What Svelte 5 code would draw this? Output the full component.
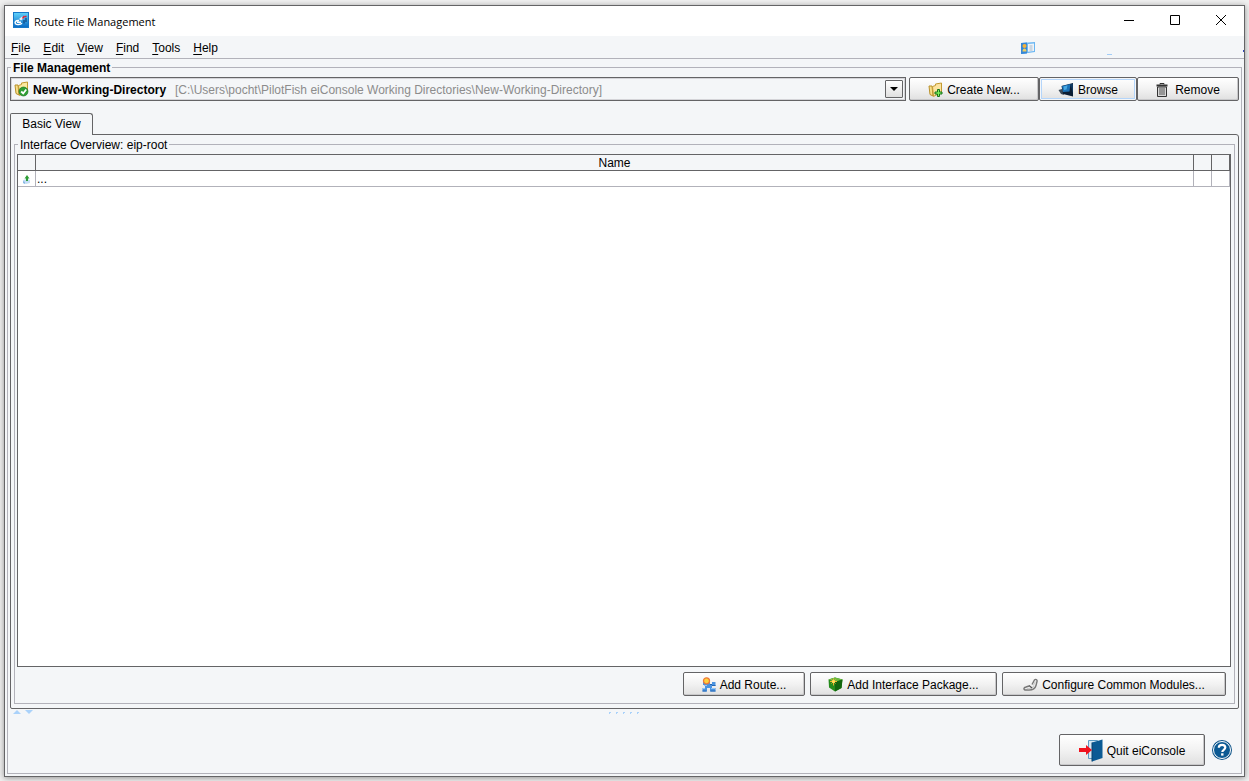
<script lang="ts">
  let directories = [
    {
      name: 'New-Working-Directory',
      path: 'C:\\Users\\pocht\\PilotFish eiConsole Working Directories\\New-Working-Directory',
    },
  ];
  let menus = ['File', 'Edit', 'View', 'Find', 'Tools', 'Help'];
  let rows = [{ name: '...' }];

  let picker: HTMLSelectElement;
  let selected = directories[0].name;
  $: current = directories.find((d) => d.name === selected);
</script>

<div class="desktop">
  <div class="window">
    <header class="titlebar">
      <svg width="16" height="16" viewBox="0 0 16 16">
        <defs>
          <linearGradient id="sky" x1="0" y1="0" x2="0" y2="1">
            <stop offset="0" stop-color="#5fd0fa" />
            <stop offset="1" stop-color="#0a6cc4" />
          </linearGradient>
        </defs>
        <rect width="16" height="16" fill="#1678c8" />
        <rect x="1" y="1" width="14" height="14" fill="url(#sky)" />
        <path d="M6 8.500C2.500 8 1.500 10.500 2.500 11.800c1.500 1.400 5 .8 6.500-.6M4 10.300h4" fill="none" stroke="#fff" stroke-width="1.400" />
        <path d="M11 8v3.500M13 6v4" stroke="#124a86" stroke-width="1.300" />
        <path d="M6 7l3-2.500 2 1.500-3 2.500z" fill="#e8eef5" />
        <path d="M9.500 6.500l2-2.500M12 4.500h1.500" stroke="#e02434" stroke-width="1.600" />
      </svg>
      <h1>Route File Management</h1>
      <div class="controls">
        <button aria-label="Minimize">
          <svg width="12" height="12" viewBox="0 0 12 12"><path d="M1 5.500h10" /></svg>
        </button>
        <button aria-label="Maximize">
          <svg width="12" height="12" viewBox="0 0 12 12"><path d="M1.500 .5h9v9h-9z" /></svg>
        </button>
        <button aria-label="Close">
          <svg width="12" height="12" viewBox="0 0 12 12"><path d="M1 0l10 10M11 0L1 10" /></svg>
        </button>
      </div>
    </header>

    <nav class="menubar">
      {#each menus as menu}
        <button><u>{menu[0]}</u>{menu.slice(1)}</button>
      {/each}
      <div class="status">
        <svg width="14" height="14" viewBox="0 0 14 14">
          <path d="M0 2L14 1v10L0 13z" fill="#6ab6f2" />
          <path d="M0 2l6-.5v11L0 13z" fill="#3587d8" />
          <path d="M7 3l6-.5v7.500l-6 .7z" fill="#eef3f8" />
          <circle cx="3.500" cy="5" r="2" fill="#f5b23a" />
          <path d="M1.500 10.500c0-4 4-4 4 0z" fill="#f2cf60" />
          <path d="M8.500 5h3M8.500 7h3M8.500 9h3" stroke="#a8b8c8" />
        </svg>
        <i class="dash"></i>
        <i class="tick"></i>
      </div>
    </nav>

    <fieldset class="management">
      <legend>File Management</legend>

      <div class="toolbar">
        <div class="combo">
          <svg width="15" height="16" viewBox="0 0 15 16">
            <path d="M1 4h3l1 10-3-1.500z" fill="#f7e08a" stroke="#b8902a" />
            <path d="M4.500 4.500l3-1V2l6-1v9l-8 4.500z" fill="#fbe9a0" stroke="#c39a30" />
            <circle cx="9.500" cy="10.500" r="4.500" fill="#2f9e34" stroke="#14701c" stroke-width=".6" />
            <path d="M7.200 10.500l2 2 3-4" fill="none" stroke="#fff" stroke-width="1.800" />
          </svg>
          <select aria-label="Working directory" bind:this={picker} bind:value={selected}>
            {#each directories as d}
              <option>{d.name}</option>
            {/each}
          </select>
          <span class="path">[{current.path}]</span>
          <button class="arrow" aria-label="Show directories" on:click={() => picker.showPicker()}>
            <svg width="8" height="4" viewBox="0 0 8 4"><path d="M0 0h8L4 4z" /></svg>
          </button>
        </div>
        <div class="actions">
          <button class="btn create">
            <svg width="15" height="16" viewBox="0 0 15 16">
              <path d="M1 4h3l1 10-3-1.500z" fill="#f7e08a" stroke="#b8902a" />
              <path d="M4.500 4.500l3-1V2l6-1v9l-8 4.500z" fill="#fbe3a0" stroke="#c39a30" />
              <path d="M9.500 7.500h2v2.500h2.500v2h-2.500v2.500h-2V12H7v-2h2.500z" fill="#7cf05a" stroke="#16721a" />
            </svg>
            Create New...
          </button>
          <button class="btn browse">
            <svg width="16" height="16" viewBox="0 0 16 16">
              <path d="M.5 8L4 7l2 6-3-1z" fill="#3c4a58" />
              <path d="M3.500 4L15 1v13.500L5 12z" fill="#0c1d33" />
              <path d="M4 4l8.500-2-1 7.500-6.500.5z" fill="#1a72b8" />
              <path d="M5.500 4.500l4-1-1 4-2.500.5z" fill="#48a9e2" />
              <path d="M12.500 2.500L15 1.500v10z" fill="#123a62" />
            </svg>
            Browse
          </button>
          <button class="btn remove">
            <svg width="12" height="14" viewBox="0 0 12 14">
              <path d="M4 1.500V.5h4v1" fill="none" stroke="#333" />
              <path d="M.5 2.500h11" stroke="#333" stroke-width="2" />
              <path d="M1.500 4h9v9.500h-9z" fill="#d8d8d8" stroke="#333" />
              <path d="M4 5v7M6 5v7M8 5v7" stroke="#555" />
            </svg>
            Remove
          </button>
        </div>
      </div>

      <div class="tabs" role="tablist">
        <button class="tab" role="tab" aria-selected="true">Basic View</button>
      </div>

      <div class="pane" role="tabpanel">
        <fieldset class="overview">
          <legend>Interface Overview: eip-root</legend>
          <div class="list">
            <table>
              <colgroup>
                <col class="narrow" /><col /><col class="narrow" /><col class="narrow" />
              </colgroup>
              <thead>
                <tr><th></th><th>Name</th><th></th><th></th></tr>
              </thead>
              <tbody>
                {#each rows as row}
                  <tr>
                    <td class="up">
                      <svg width="7" height="9" viewBox="0 0 7 9">
                        <path d="M0 5l4-1 3 1v3L3 9 0 8z" fill="#c3ddf5" />
                        <path d="M0 6l2 1v2L0 8z" fill="#8bb9e4" />
                        <path d="M4 0l2.500 3.500H5V6H3V3.500H1.500z" fill="#2f9e36" />
                      </svg>
                    </td>
                    <td>{row.name}</td>
                    <td></td>
                    <td></td>
                  </tr>
                {/each}
              </tbody>
            </table>
          </div>
          <div class="list-actions">
            <button class="btn route">
              <svg width="14" height="15" viewBox="0 0 14 15">
                <path d="M1 3h7v4h2V5h3.500v4H10v2h3.500v3.500H8V11H5v3.500H.5V11H3V8H1z" fill="#4a93e0" />
                <path d="M8 7.500h2M.5 14h4M8.500 14h5M10 8.500h3.500" stroke="#2566b4" />
                <path d="M2 8.500h3M1 11.500h2M9 11.500h4" stroke="#8fc4f7" />
                <circle cx="4.500" cy="3.800" r="3" fill="#ffd23c" stroke="#ee7a3a" stroke-width="1.300" />
              </svg>
              Add Route...
            </button>
            <button class="btn package">
              <svg width="15" height="15" viewBox="0 0 15 15">
                <path d="M.5 2.500L7 .5l7.500 2-1 8.500L7 14.500 1 10.500z" fill="#268c1c" />
                <path d="M.5 2.500L7 .5l7.500 2L7 5z" fill="#6cba3e" />
                <path d="M7 5l7.500-2.500-1 8.500L7 14.500z" fill="#12660f" />
                <path d="M5.500 1.500v7M2 4.500h7M3.500 2.500l4 4M7.500 2.500l-4 4" stroke="#f0b030" />
                <circle cx="5.500" cy="4.500" r="1.600" fill="#ffe25a" />
              </svg>
              Add Interface Package...
            </button>
            <button class="btn configure">
              <svg width="15" height="14" viewBox="0 0 15 14" fill="none">
                <path d="M9 6.500L11.500 2c1-1.200 3-.5 2.500 1.500l-1 4c-.8 3-4 4.500-7 4.500H3c-3 0-2.500-2.500 0-3l3-1" stroke="#777" stroke-width="1.400" />
                <path d="M10.500 7l2-3.500M4 10.500c3 .5 6 0 7-3" stroke="#ccc" stroke-width="1.200" />
                <path d="M6 7.500l3 2.500" stroke="#555" stroke-width="1.200" />
              </svg>
              Configure Common Modules...
            </button>
          </div>
        </fieldset>
      </div>

      <div class="divider">
        <svg width="20" height="4" viewBox="0 0 20 4">
          <path d="M0 4h8L4 0zM12 0h8l-4 4z" />
        </svg>
        <div class="grip">
          {#each Array(5) as _}
            <svg width="2" height="2" viewBox="0 0 2 2"><path d="M0 0h2v1H1v1H0z" /></svg>
          {/each}
        </div>
      </div>

      <footer>
        <button class="btn quit">
          <svg width="24" height="23" viewBox="0 0 24 23">
            <path d="M9.500 1.500h9v18h-9z" fill="#d7e9f5" stroke="#5c9cc6" />
            <path d="M13 3.500L23.500.5v18.500L13 22.500z" fill="#0b5a94" />
            <path d="M13 3.500V22.500" stroke="#08406c" />
            <path d="M0 9h7V6l6 5-6 5v-3H0z" fill="#f0131f" />
          </svg>
          Quit eiConsole
        </button>
        <button class="help" aria-label="Help">
          <svg width="20" height="20" viewBox="0 0 20 20">
            <circle cx="10" cy="10" r="10" fill="#0b5288" />
            <circle cx="10" cy="10" r="8.500" fill="#0b5a94" stroke="#fff" />
            <path d="M6.800 7.800C6.800 3.800 13.300 4 13.300 7.600c0 2.200-3 2.200-3 4.400" fill="none" stroke="#fff" stroke-width="2.200" />
            <path d="M9.100 13.300h2.400v2.300H9.100z" fill="#fff" />
          </svg>
        </button>
      </footer>
    </fieldset>
  </div>
</div>

<style>
  :global(body) {
    margin: 0;
  }

  .desktop {
    box-sizing: border-box;
    display: flex;
    min-height: 100vh;
    padding: 5px 4px 4px;
    background: #f0f0f0;
    font-family: 'Liberation Sans', Arial, sans-serif;
    font-size: 12px;
    color: #000;
  }

  button,
  select {
    margin: 0;
    padding: 0;
    border: 0;
    background: none;
    font: inherit;
    color: inherit;
  }

  svg {
    display: block;
    flex: none;
  }

  .window {
    flex: 1;
    min-width: 0;
    display: flex;
    flex-direction: column;
    border: 1px solid #646466;
    background: #f4f6f8;
    box-shadow: 0 1px 6px rgba(0, 0, 0, 0.4);
  }

  .titlebar {
    display: flex;
    align-items: center;
    height: 30px;
    padding-left: 8px;
    background: #fff;
  }

  .titlebar > svg {
    margin-bottom: 2px;
  }

  h1 {
    flex: 1;
    margin: 0 0 0 5px;
    font-family: 'Open Sans', 'Noto Sans', sans-serif;
    font-size: 11px;
    font-weight: 400;
  }

  .controls {
    display: flex;
  }

  .controls button {
    display: flex;
    align-items: center;
    justify-content: center;
    width: 46px;
    height: 28px;
  }

  .controls path {
    fill: none;
    stroke: #000;
  }

  .menubar {
    box-sizing: border-box;
    display: flex;
    align-items: center;
    gap: 13px;
    height: 23px;
    padding: 2px 0 0 6px;
    border-bottom: 1px solid #b2b2ba;
  }

  u {
    text-underline-offset: 2px;
  }

  .status {
    display: flex;
    align-items: center;
    width: 223px;
    height: 20px;
    margin-left: auto;
  }

  .dash {
    width: 5px;
    height: 1px;
    margin: 13px auto 0 72px;
    background: #a3cdf7;
  }

  .tick {
    width: 1px;
    height: 2px;
    margin-top: 6px;
    background: #3448b8;
  }

  fieldset {
    display: flex;
    flex-direction: column;
    min-width: 0;
    border: 1px solid #b2b2ba;
  }

  legend {
    padding: 2px 2px 0;
    line-height: 14px;
  }

  .management {
    flex: 1;
    margin: 0 2px 2px;
    padding: 2px 2px 7px;
  }

  .management > legend {
    margin-left: 1px;
    font-weight: 700;
  }

  .toolbar {
    display: flex;
    gap: 3px;
  }

  .combo {
    flex: 1;
    min-width: 0;
    box-sizing: border-box;
    display: flex;
    align-items: center;
    height: 24px;
    padding: 0 2px 0 3px;
    border: 1px solid #646466;
    box-shadow: inset 0 0 0 1px #d4d4d8;
  }

  select {
    appearance: none;
    margin-left: 4px;
    padding-top: 2px;
    font-weight: 700;
  }

  .path {
    flex: 1;
    min-width: 0;
    margin-left: 8px;
    padding-top: 2px;
    overflow: hidden;
    white-space: nowrap;
    color: #8c8c8c;
  }

  .arrow {
    display: flex;
    align-items: center;
    justify-content: center;
    width: 18px;
    height: 18px;
    border: 1px solid #646466;
    border-radius: 1px;
    background: linear-gradient(#fff, #e0e0e0);
  }

  .actions {
    display: flex;
  }

  .btn {
    box-sizing: border-box;
    display: flex;
    align-items: center;
    justify-content: center;
    gap: 4px;
    height: 24px;
    padding-top: 1px;
    border: 1px solid #646466;
    border-radius: 2px;
    background: linear-gradient(#fff, #f2f2f2 50%, #e0e0e0);
    box-shadow: inset -1px -1px 0 #c8c8ca;
    white-space: nowrap;
  }

  .create {
    width: 130px;
  }

  .browse {
    width: 98px;
    box-shadow: inset 0 0 0 1px #f4f6f8, inset 0 0 0 2px #b4d5fa;
  }

  .remove {
    gap: 7px;
    width: 102px;
  }

  .tabs {
    display: flex;
    margin-top: 12px;
  }

  .tab {
    z-index: 1;
    box-sizing: border-box;
    width: 83px;
    height: 22px;
    margin-bottom: -1px;
    padding-bottom: 2px;
    border: 1px solid #646466;
    border-bottom: 0;
    border-radius: 2px 3px 0 0;
    background: #f4f6f8;
  }

  .pane {
    flex: 1;
    display: flex;
    flex-direction: column;
    padding: 1px 3px 4px;
    border: 1px solid #646466;
    border-radius: 0 3px 2px 2px;
  }

  .overview {
    flex: 1;
    margin: 0;
    padding: 2px 3px 7px 2px;
  }

  .overview > legend {
    margin-left: 1px;
  }

  .list {
    flex: 1;
    border: 1px solid #646466;
    background: #fff;
  }

  table {
    width: 100%;
    table-layout: fixed;
    border-collapse: separate;
    border-spacing: 0;
  }

  .narrow {
    width: 18px;
  }

  th,
  td {
    box-sizing: border-box;
    height: 16px;
    padding: 2px 0 0;
    border: solid #b2b2ba;
    border-width: 0 1px 1px 0;
    font-weight: 400;
    line-height: 13px;
  }

  th {
    border-color: #646466;
    background: #f4f6f8;
  }

  td {
    padding-left: 1px;
  }

  .up {
    padding-left: 5px;
  }

  .list-actions {
    display: flex;
    justify-content: flex-end;
    gap: 5px;
    margin: 5px 5px 0 0;
  }

  .route {
    width: 122px;
  }

  .package {
    width: 187px;
  }

  .configure {
    width: 224px;
  }

  .divider {
    display: flex;
    align-items: flex-start;
    height: 6px;
    padding: 1px 0 0 3px;
    fill: #aad2fa;
  }

  .grip {
    display: flex;
    gap: 5px;
    margin: 2px auto 0;
    padding-right: 24px;
  }

  footer {
    display: flex;
    align-items: center;
    justify-content: flex-end;
    gap: 7px;
    margin: 18px 7px 0 0;
  }

  .quit {
    width: 146px;
    height: 32px;
  }
</style>
